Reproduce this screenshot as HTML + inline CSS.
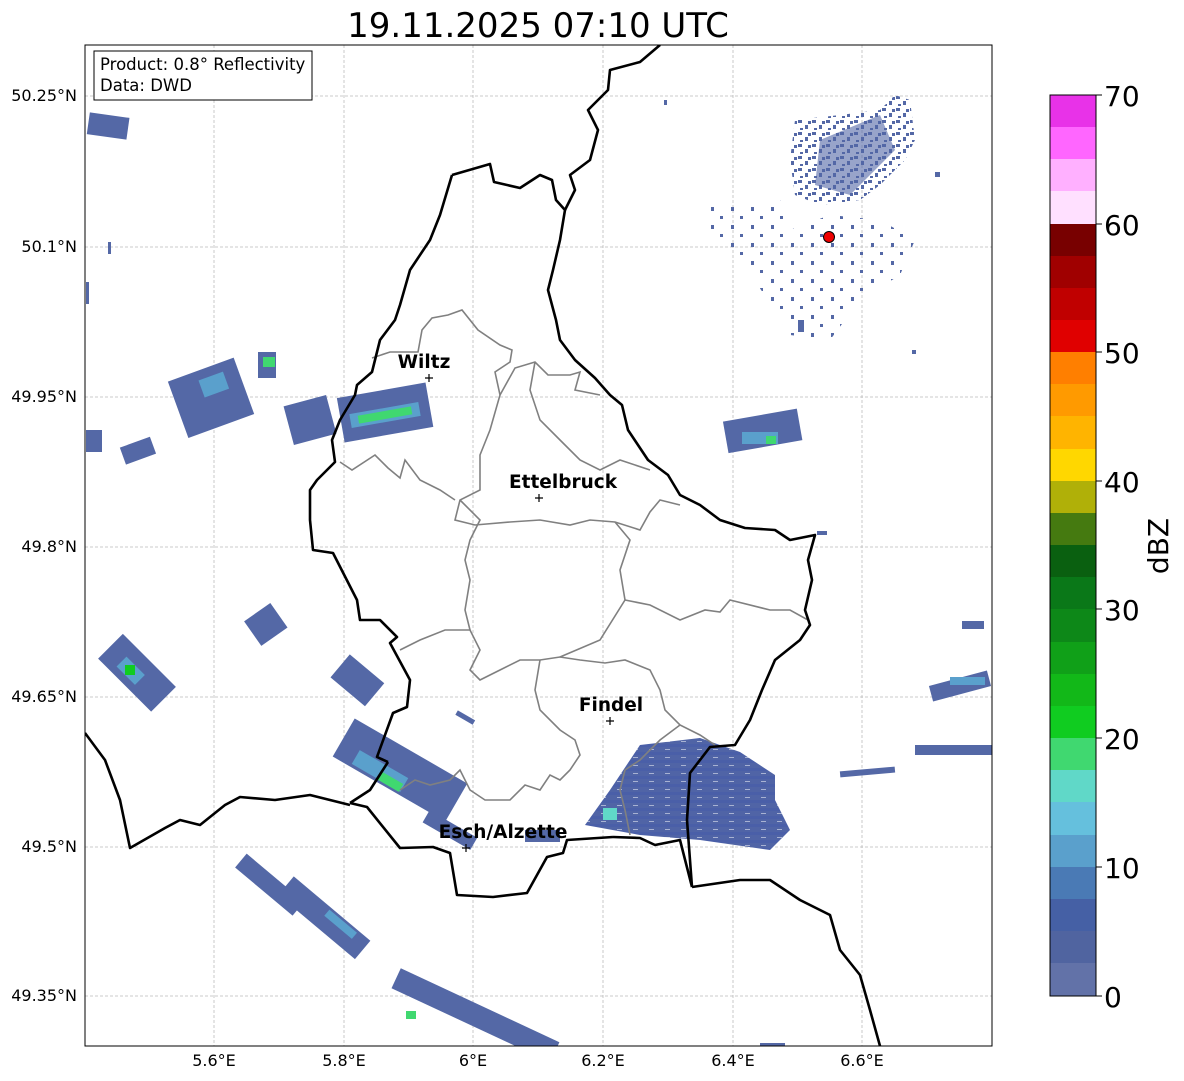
<!DOCTYPE html>
<html><head><meta charset="utf-8"><style>
html,body{margin:0;padding:0;background:#fff;}
svg{display:block;font-family:"DejaVu Sans","Liberation Sans",sans-serif;}
</style></head><body>
<svg width="1184" height="1081" viewBox="0 0 1184 1081" xmlns="http://www.w3.org/2000/svg">
<rect width="1184" height="1081" fill="#fff"/>
<text x="538" y="37" font-size="34" text-anchor="middle">19.11.2025 07:10 UTC</text>
<defs>
<clipPath id="ax"><rect x="85" y="45" width="907" height="1001"/></clipPath>
<pattern id="sp" width="14" height="12" patternUnits="userSpaceOnUse">
<rect x="0" y="0" width="4" height="3" fill="#5468a6"/><rect x="7" y="5" width="3" height="4" fill="#5468a6"/><rect x="2" y="8" width="3" height="2" fill="#5468a6"/><rect x="10" y="1" width="3" height="3" fill="#5468a6"/>
</pattern>
<pattern id="sp2" width="20" height="18" patternUnits="userSpaceOnUse">
<rect x="0" y="0" width="3" height="3" fill="#5468a6"/><rect x="11" y="9" width="3" height="4" fill="#5468a6"/>
</pattern>
<pattern id="st" width="16" height="8" patternUnits="userSpaceOnUse">
<rect width="16" height="8" fill="#5064a6"/><rect x="0" y="0" width="16" height="3" fill="#4a5fa8"/><rect x="9" y="5" width="5" height="1" fill="#fff" opacity="0.5"/>
</pattern>
</defs>
<g clip-path="url(#ax)">
<g stroke="#bbb" stroke-width="0.8" stroke-dasharray="3,2">
<line x1="214" y1="45" x2="214" y2="1046"/><line x1="344" y1="45" x2="344" y2="1046"/><line x1="473" y1="45" x2="473" y2="1046"/><line x1="603" y1="45" x2="603" y2="1046"/><line x1="733" y1="45" x2="733" y2="1046"/><line x1="862" y1="45" x2="862" y2="1046"/>
<line x1="85" y1="96" x2="992" y2="96"/><line x1="85" y1="247" x2="992" y2="247"/><line x1="85" y1="397" x2="992" y2="397"/><line x1="85" y1="547" x2="992" y2="547"/><line x1="85" y1="697" x2="992" y2="697"/><line x1="85" y1="847" x2="992" y2="847"/><line x1="85" y1="996" x2="992" y2="996"/>
</g>
<path d="M795 120 L840 115 L880 110 L895 95 L910 100 L915 140 L905 160 L880 185 L860 200 L820 205 L795 195 L790 160 Z" fill="url(#sp)"/>
<path d="M705 205 L780 200 L790 230 L830 215 L880 220 L915 240 L900 275 L860 300 L830 340 L790 335 L745 265 L710 240 Z" fill="url(#sp2)"/>
<path d="M820 140 L880 115 L895 150 L850 195 L815 185 Z" fill="#5468a6" opacity="0.6"/>
<g fill="#5468a6">
<rect x="664" y="100" width="3" height="5"/><rect x="935" y="172" width="5" height="5"/><rect x="912" y="350" width="4" height="4"/><rect x="798" y="320" width="6" height="12"/>
<rect x="88" y="115" width="40" height="22" transform="rotate(8 108 127)"/>
<rect x="108" y="242" width="3" height="12"/>
<rect x="86" y="282" width="3" height="22"/>
<rect x="86" y="430" width="16" height="22"/><rect x="122" y="442" width="32" height="18" transform="rotate(-20 137 451)"/>
<rect x="175" y="368" width="70" height="60" transform="rotate(-20 210 395)"/>
<rect x="258" y="352" width="18" height="26"/>
<rect x="288" y="400" width="44" height="40" transform="rotate(-15 310 420)"/>
<rect x="340" y="390" width="90" height="45" transform="rotate(-10 385 412)"/>
<rect x="250" y="610" width="32" height="30" transform="rotate(-35 265 625)"/>
<rect x="100" y="655" width="75" height="35" transform="rotate(45 137 672)"/>
<rect x="335" y="665" width="45" height="30" transform="rotate(40 357 680)"/>
<rect x="335" y="748" width="130" height="44" transform="rotate(30 400 770)"/>
<rect x="455" y="715" width="20" height="5" transform="rotate(30 465 718)"/>
<rect x="423" y="823" width="55" height="14" transform="rotate(30 450 829)"/>
<rect x="525" y="830" width="35" height="12"/>
<rect x="725" y="415" width="75" height="32" transform="rotate(-10 762 430)"/>
<rect x="232" y="876" width="75" height="18" transform="rotate(40 270 885)"/>
<rect x="275" y="906" width="100" height="24" transform="rotate(40 325 917)"/>
<rect x="388" y="1004" width="175" height="22" transform="rotate(25 475 1015)"/>
<rect x="930" y="678" width="60" height="16" transform="rotate(-15 960 686)"/>
<rect x="915" y="745" width="77" height="10"/>
<rect x="840" y="769" width="55" height="6" transform="rotate(-5 867 772)"/>
<rect x="962" y="621" width="22" height="8"/>
<rect x="760" y="1043" width="25" height="3"/>
<rect x="817" y="531" width="10" height="4"/>
</g>
<path d="M585 825 L610 790 L640 745 L700 738 L740 752 L775 775 L775 800 L790 830 L770 850 L700 840 L640 835 Z" fill="url(#st)"/>
<g fill="#5aa0cc">
<rect x="200" y="375" width="26" height="18" transform="rotate(-20 215 382)"/>
<rect x="350" y="408" width="70" height="14" transform="rotate(-10 385 415)"/>
<rect x="118" y="663" width="26" height="14" transform="rotate(45 130 670)"/>
<rect x="352" y="763" width="56" height="16" transform="rotate(30 380 771)"/>
<rect x="742" y="432" width="36" height="12"/>
<rect x="950" y="677" width="35" height="8"/>
<rect x="322" y="920" width="36" height="8" transform="rotate(40 340 925)"/>
</g>
<g fill="#40d870">
<rect x="358" y="411" width="54" height="8" transform="rotate(-10 385 415)"/>
<rect x="263" y="357" width="12" height="10"/>
<rect x="378" y="777" width="25" height="9" transform="rotate(30 390 781)"/>
<rect x="603" y="808" width="14" height="12" fill="#60d8c8"/>
<rect x="766" y="436" width="10" height="8"/>
<rect x="406" y="1011" width="10" height="8"/>
</g>
<rect x="125" y="665" width="10" height="10" fill="#10cc20"/>
<circle cx="829" cy="237" r="5.5" fill="#e00" stroke="#000" stroke-width="1"/>
<g fill="none" stroke="#808080" stroke-width="1.6">
<path d="M372 358 L390 352 L418 352 L422 330 L432 318 L448 315 L462 310 L478 330 L500 345 L512 350 L510 362 L495 372 L500 395 L490 430 L480 455 L480 490 L460 500 L455 520 L475 525 L510 522 L540 520 L570 525 L590 520 L615 522 L640 530 L650 512 L660 500 L680 505"/>
<path d="M340 462 L352 470 L375 455 L388 468 L400 478 L405 460 L420 480 L440 490 L455 500"/>
<path d="M500 395 L515 368 L535 362 L548 375 L570 375 L580 372 L575 390 L600 395"/>
<path d="M535 362 L530 390 L540 420 L560 440 L580 460 L600 470 L620 460 L650 470"/>
<path d="M460 500 L480 520 L470 540 L465 560 L470 580 L465 610 L470 630 L445 630 L420 640 L400 650"/>
<path d="M470 630 L480 650 L470 670 L480 680 L500 670 L520 660 L540 660 L560 657 L580 660 L605 663 L625 660 L650 670 L660 690 L665 710 L680 725 L700 735 L715 745"/>
<path d="M540 660 L535 690 L540 710 L560 730 L575 740 L580 755 L570 770 L560 780 L550 775 L540 790 L525 785 L510 800 L485 800 L470 790 L460 770 L450 780 L430 785 L415 780 L400 790"/>
<path d="M615 522 L630 540 L620 570 L625 600 L600 640 L560 657"/>
<path d="M625 600 L650 605 L680 620 L705 610 L720 612 L730 600 L770 610 L790 610 L808 620"/>
<path d="M680 725 L660 740 L640 760 L625 770 L620 790 L625 810 L630 835"/>
</g>
<g fill="none" stroke="#000" stroke-width="2.6" stroke-linejoin="round">
<path d="M452 175 L490 164 L494 182 L520 188 L540 175 L552 180 L556 200 L565 210 L560 240 L553 270 L548 290 L556 320 L560 340 L575 360 L595 378 L610 395 L622 405 L628 430 L648 460 L668 475 L680 495 L700 505 L720 520 L745 528 L775 530 L790 540 L815 535 L808 560 L812 580 L805 610 L810 625 L800 640 L775 660 L762 690 L750 720 L735 745 L710 747 L690 773 L687 820 L692 887"/>
<path d="M613 837 L567 840 L563 853 L547 857 L527 893 L493 897 L457 895 L450 853 L433 847 L400 848 L367 807 L350 803"/>
<path d="M388 762 L377 757 L393 713 L407 707 L410 680 L390 643 L397 637 L380 620 L360 620 L357 600 L333 553 L313 550 L310 520 L310 490 L317 480 L335 462 L332 440 L340 420 L355 395 L357 385 L372 372 L380 340 L395 320 L400 305 L410 270 L430 240 L440 215 L452 175"/>
<path d="M388 762 L370 790 L350 803"/>
<path d="M613 837 L640 838 L655 845 L680 840 L692 887"/>
<path d="M85 733 L105 760 L120 800 L130 848 L165 828 L180 820 L200 825 L225 805 L240 797 L275 800 L310 795 L350 805"/>
<path d="M565 210 L575 190 L570 175 L590 160 L598 130 L588 110 L608 90 L610 70 L640 62 L660 45"/>
<path d="M692 887 L740 880 L770 880 L800 900 L830 915 L840 950 L860 975 L870 1010 L880 1046"/>
</g>
<g font-weight="bold" font-size="18.5" text-anchor="middle">
<text x="424" y="368">Wiltz</text><text x="563" y="488">Ettelbruck</text><text x="611" y="711">Findel</text><text x="503" y="838">Esch/Alzette</text>
</g>
<g stroke="#000" stroke-width="1.2">
<path d="M425 378h8M429 374v8"/><path d="M535 498h8M539 494v8"/><path d="M606 721h8M610 717v8"/><path d="M462 848h8M466 844v8"/>
</g>
</g>
<rect x="85" y="45" width="907" height="1001" fill="none" stroke="#000" stroke-width="1"/>
<rect x="94" y="51" width="218" height="49" fill="#fff" stroke="#000" stroke-width="1"/>
<text x="100" y="70" font-size="16.5">Product: 0.8° Reflectivity</text>
<text x="100" y="91" font-size="16.5">Data: DWD</text>
<g font-size="16" text-anchor="end">
<text x="77" y="101">50.25°N</text><text x="77" y="252">50.1°N</text><text x="77" y="402">49.95°N</text><text x="77" y="552">49.8°N</text><text x="77" y="702">49.65°N</text><text x="77" y="852">49.5°N</text><text x="77" y="1001">49.35°N</text>
</g>
<g font-size="16" text-anchor="middle">
<text x="214" y="1066">5.6°E</text><text x="344" y="1066">5.8°E</text><text x="473" y="1066">6°E</text><text x="603" y="1066">6.2°E</text><text x="733" y="1066">6.4°E</text><text x="862" y="1066">6.6°E</text>
</g>
<g>
<rect x="1050" y="95" width="46" height="33" fill="#e832e8"/>
<rect x="1050" y="127" width="46" height="33" fill="#ff66ff"/>
<rect x="1050" y="159" width="46" height="33" fill="#ffb0ff"/>
<rect x="1050" y="191" width="46" height="33" fill="#ffe0ff"/>
<rect x="1050" y="224" width="46" height="33" fill="#780000"/>
<rect x="1050" y="256" width="46" height="33" fill="#a00000"/>
<rect x="1050" y="288" width="46" height="33" fill="#c00000"/>
<rect x="1050" y="320" width="46" height="33" fill="#e00000"/>
<rect x="1050" y="352" width="46" height="33" fill="#ff7f00"/>
<rect x="1050" y="384" width="46" height="33" fill="#ff9a00"/>
<rect x="1050" y="416" width="46" height="33" fill="#ffb400"/>
<rect x="1050" y="449" width="46" height="33" fill="#ffd700"/>
<rect x="1050" y="481" width="46" height="33" fill="#b0b008"/>
<rect x="1050" y="513" width="46" height="33" fill="#457a10"/>
<rect x="1050" y="545" width="46" height="33" fill="#0a6010"/>
<rect x="1050" y="577" width="46" height="33" fill="#0a7818"/>
<rect x="1050" y="609" width="46" height="33" fill="#0d8818"/>
<rect x="1050" y="642" width="46" height="33" fill="#10a018"/>
<rect x="1050" y="674" width="46" height="33" fill="#12b818"/>
<rect x="1050" y="706" width="46" height="33" fill="#10cc20"/>
<rect x="1050" y="738" width="46" height="33" fill="#40d870"/>
<rect x="1050" y="770" width="46" height="33" fill="#60d8c8"/>
<rect x="1050" y="802" width="46" height="33" fill="#65c0dd"/>
<rect x="1050" y="835" width="46" height="33" fill="#5aa0cc"/>
<rect x="1050" y="867" width="46" height="33" fill="#4a7ab5"/>
<rect x="1050" y="899" width="46" height="33" fill="#4560a5"/>
<rect x="1050" y="931" width="46" height="33" fill="#5064a0"/>
<rect x="1050" y="963" width="46" height="33" fill="#6272a8"/>
<rect x="1050" y="95" width="46" height="901" fill="none" stroke="#000" stroke-width="1"/>
<g stroke="#000" stroke-width="1"><path d="M1096 95h6M1096 224h6M1096 352h6M1096 481h6M1096 609h6M1096 738h6M1096 867h6M1096 996h6"/></g>
<g font-size="28">
<text x="1104" y="106">70</text><text x="1104" y="235">60</text><text x="1104" y="363">50</text><text x="1104" y="492">40</text><text x="1104" y="620">30</text><text x="1104" y="749">20</text><text x="1104" y="878">10</text><text x="1104" y="1007">0</text>
</g>
<text x="0" y="0" font-size="28" text-anchor="middle" transform="translate(1168 546) rotate(-90)">dBZ</text>
</g>
</svg>
</body></html>
